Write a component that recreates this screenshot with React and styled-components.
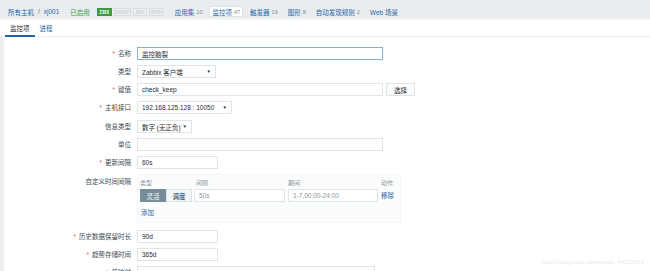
import React from "react";
import styled, { createGlobalStyle } from "styled-components";

const Global = createGlobalStyle`
  html, body { margin: 0; padding: 0; background: #ffffff; }
  body { font-family: "Liberation Sans", Arial, "Noto Sans CJK SC", sans-serif; font-size: 6.5px; color: #1f2c33; }
  #root { width: 650px; height: 271px; overflow: hidden; position: relative; }
`;

const Page = styled.div`
  width: 650px;
  height: 271px;
  display: flex;
  flex-direction: column;
  overflow: hidden;
  position: relative;
`;

const TopBar = styled.div`
  flex-shrink: 0;
  height: 13px;
  background: #e9edf0;
  border-bottom: 2px solid #f1f4f6;
  display: flex;
  align-items: center;
  padding: 5px 0 0 8px;
  box-sizing: content-box;
`;

const Crumb = styled.span`
  color: ${(p) => (p.$green ? "#3b9e3f" : "#1f65a6")};
  margin-right: ${(p) => p.$mr || 0}px;
  white-space: nowrap;
`;

const Sep = styled.span`
  color: #5a6a74;
  margin: 0 4px 0 4px;
`;

const Badge = styled.span`
  box-sizing: border-box;
  display: inline-flex;
  align-items: center;
  justify-content: center;
  width: ${(p) => p.$w}px;
  height: 8px;
  margin-right: ${(p) => p.$mr || 2}px;
  font-size: 5px;
  border: 1px solid ${(p) => (p.$on ? "#3a9a3e" : "#d6dde1")};
  background: ${(p) => (p.$on ? "#3a9a3e" : "#eef1f3")};
  color: ${(p) => (p.$on ? "#ffffff" : "#b8c2c8")};
  font-weight: ${(p) => (p.$on ? "bold" : "normal")};
`;

const NavItem = styled.span`
  display: inline-flex;
  align-items: center;
  height: 9px;
  padding: 0 2px;
  margin-right: ${(p) => p.$mr || 4}px;
  color: #1f65a6;
  white-space: nowrap;
  background: ${(p) => (p.$active ? "#ffffff" : "transparent")};
  border: 1px solid ${(p) => (p.$active ? "#dfe4e7" : "transparent")};
`;

const Count = styled.span`
  color: #7b8a93;
  margin-left: 2px;
  font-size: 5.5px;
`;

const Tabs = styled.div`
  flex-shrink: 0;
  height: 16px;
  display: flex;
  align-items: stretch;
  padding-left: 5px;
  border-bottom: 1px solid #ebeef0;
  background: #fff;
`;

const Tab = styled.div`
  display: flex;
  align-items: center;
  padding: 0 5px;
  color: ${(p) => (p.$active ? "#1f2c33" : "#1f65a6")};
  border-bottom: 2px solid ${(p) => (p.$active ? "#1f65a6" : "transparent")};
  margin-bottom: -1px;
`;

const Body = styled.div`
  flex: 1;
  min-height: 0;
  background: #ebeef0;
  padding-left: 4px;
  display: flex;
`;

const Panel = styled.div`
  flex: 1;
  background: #ffffff;
  padding-top: 10px;
`;

const Form = styled.div`
  display: grid;
  grid-template-columns: 127px 1fr;
  column-gap: 6px;
  row-gap: 5px;
  align-items: center;
`;

const Label = styled.div`
  text-align: right;
  color: #3d4a52;
  white-space: nowrap;
  line-height: 8px;
  align-self: ${(p) => (p.$top ? "start" : "center")};
  padding-top: ${(p) => (p.$top ? 4 : 0)}px;
  margin-top: ${(p) => p.$mt || 0}px;
`;

const Star = styled.span`
  color: #e45959;
  margin-right: 3px;
`;

const Field = styled.div`
  display: flex;
  align-items: center;
  gap: 3px;
  margin-top: ${(p) => p.$mt || 0}px;
`;

const Input = styled.div`
  box-sizing: border-box;
  width: ${(p) => p.$w}px;
  height: 13px;
  border: 1px solid ${(p) => (p.$focus ? "#7fb4d9" : "#dfe4e7")};
  background: #fff;
  display: flex;
  align-items: center;
  padding-left: 4px;
  color: ${(p) => (p.$muted ? "#8a979e" : "#1f2c33")};
  white-space: nowrap;
`;

const Select = styled(Input)`
  justify-content: space-between;
  padding-right: 4px;
`;

const Caret = styled.span`
  font-size: 4.5px;
  color: #1f2c33;
`;

const Button = styled.div`
  box-sizing: border-box;
  height: 13px;
  padding: 0 7px;
  display: flex;
  align-items: center;
  border: 1px solid #dfe4e7;
  background: #fafbfb;
  color: #1f2c33;
`;

const IntervalBox = styled.div`
  box-sizing: border-box;
  width: 264px;
  height: 49px;
  background: #fbfcfc;
  border: 1px solid #f3f5f6;
  padding: 3px 3px 0 2px;
  display: grid;
  grid-template-columns: 54px 94px 93px 1fr;
  grid-template-rows: 10px 13px 17px;
  row-gap: 1px;
  align-items: center;
`;

const Head = styled.div`
  color: #8a979e;
  font-size: 6px;
  line-height: 10px;
  padding-left: ${(p) => p.$pl || 0}px;
`;

const Seg = styled.div`
  display: flex;
`;

const SegBtn = styled.div`
  box-sizing: border-box;
  width: 26px;
  height: 13px;
  display: flex;
  align-items: center;
  justify-content: center;
  background: ${(p) => (p.$on ? "#768d99" : "#f4f6f7")};
  color: ${(p) => (p.$on ? "#ffffff" : "#1f2c33")};
  border: 1px solid ${(p) => (p.$on ? "#768d99" : "#dfe4e7")};
`;

const Link = styled.span`
  color: #1f65a6;
  line-height: 8px;
`;

const AddRow = styled.div`
  grid-column: 1 / -1;
  align-self: end;
  padding-bottom: 3px;
  padding-left: 1px;
`;

const Watermark = styled.div`
  position: absolute;
  right: 6px;
  bottom: 6px;
  font-size: 6px;
  color: #e6e9eb;
`;

export default function App() {
  return (
    <Page>
      <Global />
      <TopBar>
        <Crumb>所有主机</Crumb>
        <Sep>/</Sep>
        <Crumb $mr={11}>xj001</Crumb>
        <Crumb $green $mr={7}>已启用</Crumb>
        <Badge $on $w={15}>ZBX</Badge>
        <Badge $w={17}>SNMP</Badge>
        <Badge $w={14}>JMX</Badge>
        <Badge $w={14} $mr={9}>IPMI</Badge>
        <NavItem>应用集<Count>10</Count></NavItem>
        <NavItem $active>监控项<Count>47</Count></NavItem>
        <NavItem>触发器<Count>19</Count></NavItem>
        <NavItem>图形<Count>8</Count></NavItem>
        <NavItem>自动发现规则<Count>2</Count></NavItem>
        <NavItem>Web 场景</NavItem>
      </TopBar>
      <Tabs>
        <Tab $active>监控项</Tab>
        <Tab>进程</Tab>
      </Tabs>
      <Body>
        <Panel>
          <Form>
            <Label><Star>*</Star>名称</Label>
            <Field><Input $w={246} $focus>监控脑裂</Input></Field>

            <Label>类型</Label>
            <Field><Select $w={79}>Zabbix 客户端<Caret>▼</Caret></Select></Field>

            <Label><Star>*</Star>键值</Label>
            <Field><Input $w={246}>check_keep</Input><Button>选择</Button></Field>

            <Label><Star>*</Star>主机接口</Label>
            <Field><Select $w={95}>192.168.125.128 : 10050<Caret>▼</Caret></Select></Field>

            <Label $mt={1}>信息类型</Label>
            <Field $mt={1}><Select $w={55}>数字 (无正负)<Caret>▼</Caret></Select></Field>

            <Label>单位</Label>
            <Field><Input $w={246} /></Field>

            <Label><Star>*</Star>更新间隔</Label>
            <Field><Input $w={81}>60s</Input></Field>

            <Label $top>自定义时间间隔</Label>
            <Field>
              <IntervalBox>
                <Head>类型</Head>
                <Head $pl={2}>间隔</Head>
                <Head>期间</Head>
                <Head>动作</Head>
                <Seg>
                  <SegBtn $on>灵活</SegBtn>
                  <SegBtn>调度</SegBtn>
                </Seg>
                <Input $w={91} $muted>50s</Input>
                <Input $w={90} $muted>1-7,00:00-24:00</Input>
                <Link>移除</Link>
                <AddRow><Link>添加</Link></AddRow>
              </IntervalBox>
            </Field>

            <Label $mt={2}><Star>*</Star>历史数据保留时长</Label>
            <Field $mt={2}><Input $w={81}>90d</Input></Field>

            <Label><Star>*</Star>趋势存储时间</Label>
            <Field><Input $w={81}>365d</Input></Field>

            <Label><Star>*</Star>值映射</Label>
            <Field><Input $w={238} /></Field>
          </Form>
        </Panel>
      </Body>
      <Watermark>https://blog.csdn.net/weixin_44133376</Watermark>
    </Page>
  );
}
